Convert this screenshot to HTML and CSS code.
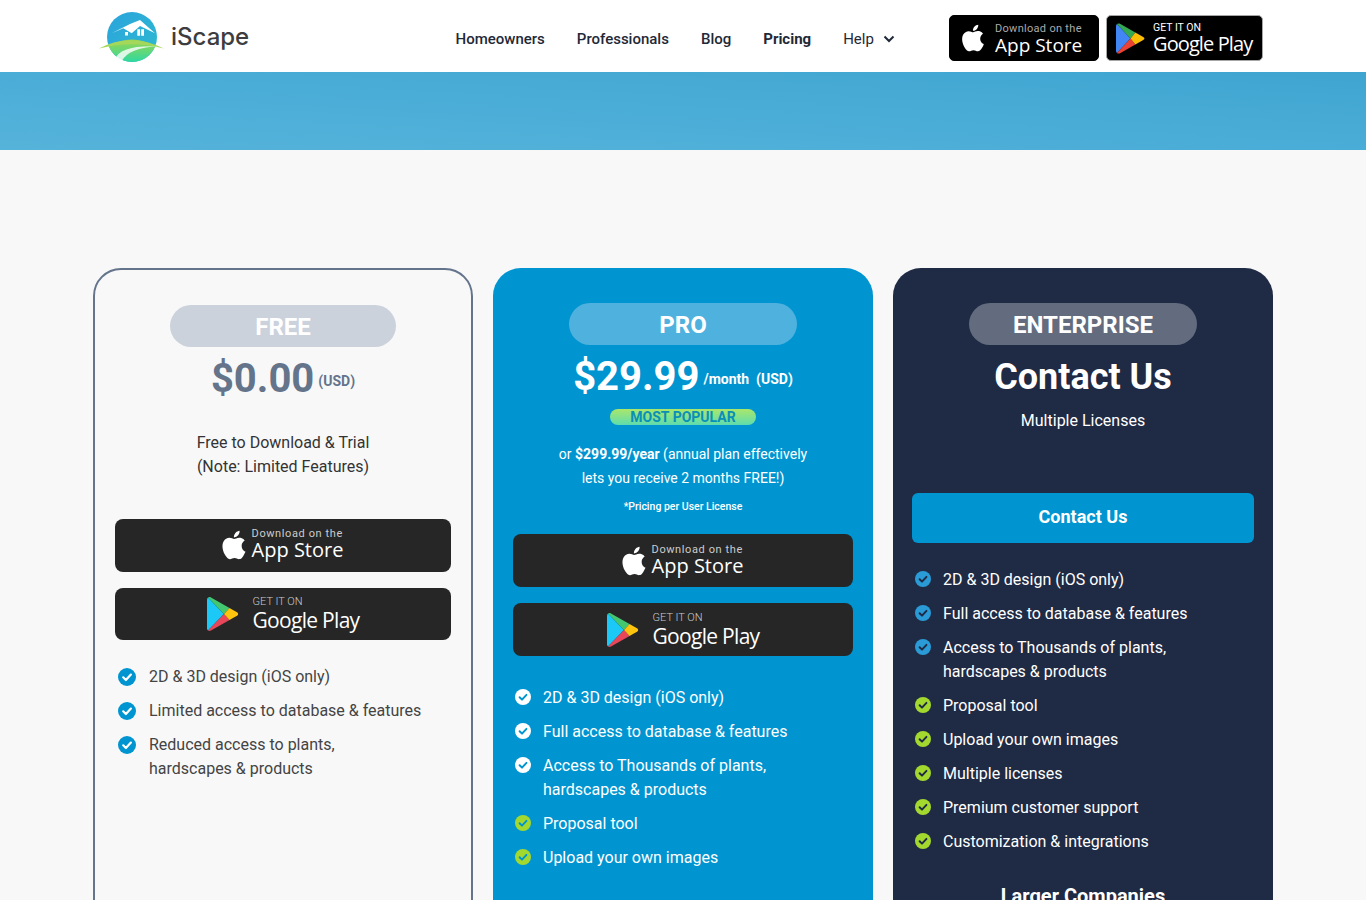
FILE: index.html
```html
<!DOCTYPE html>
<html lang="en">
<head>
  <meta charset="UTF-8">
  <title>iScape Pricing</title>
  <link rel="stylesheet" href="styles.css">
</head>
<body>
  <svg class="defs" aria-hidden="true">
    <symbol id="apple" viewBox="0 0 24 24">
      <path fill="#fff" d="M18.71 19.5c-.83 1.24-1.71 2.45-3.05 2.47-1.34.03-1.77-.79-3.29-.79-1.53 0-2 .77-3.27.82-1.31.05-2.3-1.32-3.14-2.53C4.25 17 2.94 12.45 4.7 9.39c.87-1.52 2.43-2.48 4.12-2.51 1.28-.02 2.5.87 3.29.87.78 0 2.26-1.07 3.81-.91.65.03 2.47.26 3.64 1.98-.09.06-2.17 1.28-2.15 3.81.03 3.02 2.65 4.03 2.68 4.04-.03.07-.42 1.44-1.38 2.83M13 3.5c.73-.83 1.94-1.46 2.94-1.5.13 1.17-.34 2.35-1.04 3.19-.69.85-1.83 1.51-2.95 1.42-.15-1.15.41-2.35 1.05-3.11z"/>
    </symbol>
    <symbol id="play" viewBox="0 0 32 36">
      <path fill="#1cc8f5" d="M1 1.500 17 18 1 34.500C.4 34 0 33.200 0 32.300V3.700C0 2.800.4 2 1 1.500z"/>
      <path fill="#43c76f" d="M1 1.500c.8-.6 1.900-.7 3-.1L22.500 12 17 18z"/>
      <path fill="#e8475a" d="M1 34.500c.8.6 1.900.7 3 .1L22.500 24 17 18z"/>
      <path fill="#fdc40f" d="m22.500 12 7.500 4.200c1.500.9 1.500 2.700 0 3.600L22.500 24 17 18z"/>
    </symbol>
    <symbol id="play-new" viewBox="0 0 30 32">
      <path fill="#4285f4" d="M1 1C.4 1.500 0 2.300 0 3.200v25.600c0 .9.400 1.700 1 2.200L15 16z"/>
      <path fill="#34a853" d="M1 1c.8-.7 2-.9 3.200-.2L20 9.800 15 16z"/>
      <path fill="#ea4335" d="M1 31c.8.7 2 .9 3.200.2L20 22.200 15 16z"/>
      <path fill="#fbbc04" d="m20 9.800 8.200 4.600c1.600.9 1.600 2.300 0 3.200L20 22.200 15 16z"/>
    </symbol>
    <symbol id="tick" viewBox="0 0 18 18">
      <circle cx="9" cy="9" r="9" fill="currentColor"/>
      <path d="M5.200 9.300 7.900 12l5-5.400" fill="none" stroke="var(--tick)" stroke-width="2.200" stroke-linecap="round" stroke-linejoin="round"/>
    </symbol>
  </svg>

  <div class="page">
    <header class="topbar">
      <a class="logo" href="#">
        <svg class="logo-mark" viewBox="0 0 66 54" width="66" height="54">
          <defs>
            <linearGradient id="sky" x1="0" y1="0" x2="1" y2="1">
              <stop offset="0" stop-color="#2ba3dc"/>
              <stop offset="1" stop-color="#2dbbd0"/>
            </linearGradient>
            <linearGradient id="hill" x1="0" y1="0" x2="0" y2="1">
              <stop offset="0" stop-color="#9bd64e"/>
              <stop offset="1" stop-color="#2ed9a0"/>
            </linearGradient>
          </defs>
          <circle cx="33" cy="26" r="25" fill="url(#sky)"/>
          <path d="M9.700 35Q33 22 56.300 35A25 25 0 0 1 9.700 35z" fill="url(#hill)"/>
          <path d="M0 37.500Q31 21 65 37.500 33 29 0 37.500z" fill="#a5d85a"/>
          <path d="M16 49Q20 34 59 35.500 30 36 22 51z" fill="#fff" opacity=".8"/>
          <path d="M12.700 22.300 31 13l10-4 15 13.300L41 15l-8.300 7.300-8.400-5z" fill="#fff"/>
          <path d="M26 21h3v3.500h-3zM38.300 18.300h2.800v6.400h-2.800zM42.200 18.300H45v6.400h-2.800z" fill="#fff"/>
        </svg>
        <span class="logo-name">iScape</span>
      </a>
      <nav class="nav">
        <a href="#">Homeowners</a>
        <a href="#">Professionals</a>
        <a href="#">Blog</a>
        <a class="strong" href="#">Pricing</a>
        <a class="plain help" href="#">Help
          <svg viewBox="0 0 12 8" width="12" height="8"><path d="M1.500 1.500 6 6l4.500-4.500" fill="none" stroke="#1f2937" stroke-width="2"/></svg>
        </a>
      </nav>
      <div class="badges">
        <a class="badge badge-apple" href="#">
          <svg width="32" height="32"><use href="#apple"/></svg>
          <span><small>Download on the</small><b>App Store</b></span>
        </a>
        <a class="badge badge-play" href="#">
          <svg width="29" height="31"><use href="#play-new"/></svg>
          <span><small>GET IT ON</small><b>Google Play</b></span>
        </a>
      </div>
    </header>

    <div class="hero"></div>

    <main class="plans">
      <section class="plan plan-free">
        <div class="pill">FREE</div>
        <div class="price">$0.00<span>(USD)</span></div>
        <p class="desc">Free to Download &amp; Trial<br>(Note: Limited Features)</p>
        <a class="store store-apple" href="#">
          <svg width="34" height="34"><use href="#apple"/></svg>
          <span><small>Download on the</small><b>App Store</b></span>
        </a>
        <a class="store store-play" href="#">
          <svg width="32" height="36"><use href="#play"/></svg>
          <span><small>GET IT ON</small><b>Google Play</b></span>
        </a>
        <ul class="features">
          <li><svg><use href="#tick"/></svg>2D &amp; 3D design (iOS only)</li>
          <li><svg><use href="#tick"/></svg>Limited access to database &amp; features</li>
          <li><svg><use href="#tick"/></svg><span>Reduced access to plants,<br>hardscapes &amp; products</span></li>
        </ul>
      </section>

      <section class="plan plan-pro">
        <div class="pill">PRO</div>
        <div class="price">$29.99<span>/month &nbsp;(USD)</span></div>
        <div class="popular">MOST POPULAR</div>
        <p class="desc">or <b>$299.99/year</b> (annual plan effectively<br>lets you receive 2 months FREE!)</p>
        <p class="fine">*Pricing per User License</p>
        <a class="store store-apple" href="#">
          <svg width="34" height="34"><use href="#apple"/></svg>
          <span><small>Download on the</small><b>App Store</b></span>
        </a>
        <a class="store store-play" href="#">
          <svg width="32" height="36"><use href="#play"/></svg>
          <span><small>GET IT ON</small><b>Google Play</b></span>
        </a>
        <ul class="features">
          <li><svg><use href="#tick"/></svg>2D &amp; 3D design (iOS only)</li>
          <li><svg><use href="#tick"/></svg>Full access to database &amp; features</li>
          <li><svg><use href="#tick"/></svg><span>Access to Thousands of plants,<br>hardscapes &amp; products</span></li>
          <li class="extra"><svg><use href="#tick"/></svg>Proposal tool</li>
          <li class="extra"><svg><use href="#tick"/></svg>Upload your own images</li>
        </ul>
      </section>

      <section class="plan plan-ent">
        <div class="pill">ENTERPRISE</div>
        <div class="price">Contact Us</div>
        <p class="desc">Multiple Licenses</p>
        <a class="contact" href="#">Contact Us</a>
        <ul class="features">
          <li><svg><use href="#tick"/></svg>2D &amp; 3D design (iOS only)</li>
          <li><svg><use href="#tick"/></svg>Full access to database &amp; features</li>
          <li><svg><use href="#tick"/></svg><span>Access to Thousands of plants,<br>hardscapes &amp; products</span></li>
          <li class="extra"><svg><use href="#tick"/></svg>Proposal tool</li>
          <li class="extra"><svg><use href="#tick"/></svg>Upload your own images</li>
          <li class="extra"><svg><use href="#tick"/></svg>Multiple licenses</li>
          <li class="extra"><svg><use href="#tick"/></svg>Premium customer support</li>
          <li class="extra"><svg><use href="#tick"/></svg>Customization &amp; integrations</li>
        </ul>
        <h3 class="larger">Larger Companies</h3>
      </section>
    </main>
  </div>
</body>
</html>
```

FILE: styles.css
```css
* {
  box-sizing: border-box;
}

html, body {
  margin: 0;
}

body {
  font-family: Roboto, "Liberation Sans", sans-serif;
  color: #333;
  background: #f8f8f9;
}

a {
  color: inherit;
  text-decoration: none;
}

.defs {
  position: absolute;
  width: 0;
  height: 0;
}

.page {
  height: 900px;
  overflow: hidden;
}

/* header */
.topbar {
  display: flex;
  align-items: center;
  height: 72px;
  padding: 4px 103px 0 99px;
  background: #fff;
}

.logo {
  display: flex;
  align-items: center;
  gap: 6px;
  width: 356.500px;
}

.logo-name {
  font-family: Inter, Lato, sans-serif;
  font-size: 24px;
  font-weight: 500;
  color: #3d3d3f;
  margin-top: -4px;
}

.nav {
  display: flex;
  align-items: center;
  gap: 32px;
  margin-top: 1px;
  font-size: 15px;
  font-weight: 500;
  color: #1f2937;
}

.nav .strong {
  font-weight: 700;
}

.nav .plain {
  font-weight: 400;
}

.help {
  display: flex;
  align-items: center;
  gap: 9px;
}

.badges {
  display: flex;
  gap: 7px;
  margin-left: auto;
}

.badge {
  display: flex;
  align-items: center;
  height: 46px;
  background: #000;
  border: 1px solid #a6a6a6;
  border-radius: 5px;
  color: #fff;
}

.badge span {
  display: flex;
  flex-direction: column;
  margin-top: 1px;
}

.badge small {
  font-size: 11px;
  line-height: 12px;
  letter-spacing: .3px;
  color: #aaa;
}

.badge b {
  font-size: 19px;
  line-height: 20px;
  font-weight: 500;
  font-family: "Open Sans", sans-serif;
}

.badge-apple {
  width: 150px;
  padding-left: 7px;
  gap: 6px;
  border-color: #000;
}

.badge-play {
  width: 157px;
  padding-left: 9px;
  gap: 8px;
}

.badge-play span {
  margin-top: -1px;
}

.badge-play b {
  font-size: 20px;
  letter-spacing: -.9px;
}

.badge-play small {
  color: #fff;
  font-size: 10.500px;
  letter-spacing: 0;
}

.hero {
  height: 78px;
  background: linear-gradient(to top right, #56b3da 0%, #4aadd7 50%, #3fa5d0 100%);
}

/* plans */
.plans {
  display: grid;
  grid-template-columns: repeat(3, 380px);
  gap: 20px;
  margin-top: 118px;
  padding-left: 93px;
}

.plan {
  min-height: 900px;
  padding: 35px 20px;
  border-radius: 28px;
  text-align: center;
}

.plan-free {
  border: 2px solid #64748b;
}

.plan-pro {
  background: #0095d0;
  color: #fff;
}

.plan-ent {
  background: #1f2a44;
  color: #fff;
  padding: 35px 19px;
}

.pill {
  height: 42px;
  margin: 0 auto;
  width: 228px;
  border-radius: 21px;
  font-size: 24px;
  font-weight: 700;
  line-height: 44px;
  color: #fff;
}

.plan-free .pill {
  width: 226px;
  background: #cbd2dc;
}

.plan-pro .pill {
  background: #4fb2de;
}

.plan-ent .pill {
  background: #636b7e;
}

.price {
  margin-top: 7px;
  font-size: 40px;
  font-weight: 700;
  line-height: 50px;
}

.price span {
  margin-left: 4px;
  font-size: 14px;
  line-height: 1;
  vertical-align: 6px;
}

.plan-free .price {
  color: #64748b;
}

.plan-ent .price {
  font-size: 36px;
}

.desc {
  margin: 27px 0 40px;
  font-size: 16px;
  line-height: 24px;
}

.plan-pro .desc {
  margin: 17px 0 0;
  font-size: 14px;
}

.plan-ent .desc {
  margin: 7px 0 60px;
}

.popular {
  width: 146px;
  height: 16px;
  margin: 7px auto 0;
  border-radius: 8px;
  background: linear-gradient(#aae76a, #5edcae);
  color: #0a8fb8;
  font-size: 14px;
  font-weight: 700;
  line-height: 16px;
}

.fine {
  margin: 10px 0 20px;
  font-size: 10.500px;
  font-weight: 500;
  line-height: 14px;
}

.store {
  display: flex;
  align-items: center;
  justify-content: center;
  height: 53px;
  margin-bottom: 16px;
  border-radius: 8px;
  background: #262626;
  color: #fff;
  text-align: left;
}

.plan-free .store {
  height: 52.500px;
}

.store span {
  display: flex;
  flex-direction: column;
}

.store small {
  font-size: 11px;
  line-height: 13px;
  color: #ccc;
}

.store b {
  font-family: "Open Sans", sans-serif;
  font-weight: 400;
}

.store-apple {
  gap: 1px;
  padding-right: 6px;
}

.store-apple span {
  margin-top: -3px;
}

.store-apple small {
  letter-spacing: .6px;
}

.store-apple b {
  font-size: 20px;
  line-height: 20px;
}

.store-play {
  gap: 14px;
}

.store-play small {
  font-weight: 300;
}

.store-play b {
  font-size: 21px;
  line-height: 25px;
  letter-spacing: -.7px;
}

.contact {
  display: block;
  height: 50px;
  border-radius: 6px;
  background: #0095d0;
  font-size: 18px;
  font-weight: 700;
  line-height: 48px;
}

.features {
  display: flex;
  flex-direction: column;
  gap: 10px;
  margin: 0;
  padding: 0;
  list-style: none;
  text-align: left;
  font-size: 16px;
  line-height: 24px;
}

.features li {
  display: flex;
  gap: 12px;
}

.features svg {
  flex: none;
  width: 16px;
  height: 16px;
  margin-top: 3px;
  color: #fff;
  --tick: #0095d0;
}

.features .extra svg {
  color: #a3d92f;
  --tick: #0095d0;
}

.plan-free .features {
  margin-top: 25px;
  padding-left: 3px;
  color: #444;
}

.plan-free .features li {
  gap: 13px;
}

.plan-free .features svg {
  width: 18px;
  height: 18px;
  color: #0095d0;
  --tick: #fff;
}

.plan-pro .features {
  margin-top: 30px;
  padding-left: 2px;
}

.plan-ent .features {
  margin-top: 25px;
  padding-left: 3px;
}

.plan-ent .features svg {
  color: #2a9bd6;
  --tick: #1f2a44;
}

.plan-ent .features .extra svg {
  color: #a3d92f;
  --tick: #1f2a44;
}

.larger {
  margin: 30px 0 0;
  font-size: 20px;
  font-weight: 700;
  line-height: 24px;
}
```
